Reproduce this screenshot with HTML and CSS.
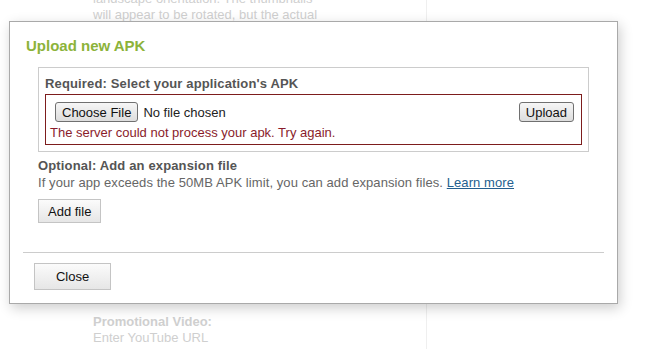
FILE: index.html
```html
<!DOCTYPE html>
<html>
<head>
    <title>Upload new APK</title>
    <link rel="stylesheet" href="styles.css">
</head>
<body>
    <div class="page">
        <div class="main">
            <p class="faded">landscape orientation. The thumbnails<br>will appear to be rotated, but the actual</p>
            <div class="faded-block">
                <div class="faded-label">Promotional Video:</div>
                <p class="faded">Enter YouTube URL</p>
            </div>
        </div>
        <div class="side"></div>
    </div>

    <div class="dialog">
        <h2 class="dialog-title">Upload new APK</h2>
        <div class="dialog-body">
            <div class="required-box">
                <div class="label">Required: Select your application's APK</div>
                <div class="error-box">
                    <div class="file-row">
                        <div class="file-input">
                            <button class="sys-btn">Choose File</button>
                            <span>No file chosen</span>
                        </div>
                        <button class="sys-btn">Upload</button>
                    </div>
                    <div class="error-text">The server could not process your apk. Try again.</div>
                </div>
            </div>
            <div class="label optional">Optional: Add an expansion file</div>
            <p class="hint">If your app exceeds the 50MB APK limit, you can add expansion files. <a href="#">Learn more</a></p>
            <button class="btn add-btn">Add file</button>
        </div>
        <div class="dialog-footer">
            <button class="btn close-btn">Close</button>
        </div>
    </div>
</body>
</html>
```

FILE: styles.css
```css
:root {
    --title-color: #8cb33a;
    --label-color: #555555;
    --text-color: #666666;
    --border-color: #cccccc;
    --error-color: #8a1c2b;
    --error-border: #7d1d1d;
    --link-color: #245f8f;
    --faded-color: #cfcfcf;
}

body {
    margin: 0;
    background: white;
    font-family: "Liberation Sans", Arial, sans-serif;
    font-size: 13px;
    color: var(--text-color);
    overflow: hidden;
}

.page {
    display: grid;
    grid-template-columns: 426px 1fr;
    height: 349px;
}

.main {
    display: flex;
    flex-direction: column;
    justify-content: space-between;
    padding: 0 0 3px 93px;
}

.side {
    border-left: 1px solid #efefef;
}

.faded {
    margin: 0;
    color: var(--faded-color);
    line-height: 16px;
}

.main > .faded {
    margin-top: -9px;
}

.faded-label {
    color: var(--faded-color);
    font-weight: bold;
    line-height: 16px;
}

.dialog {
    position: absolute;
    top: 21px;
    left: 9px;
    width: 609px;
    height: 283px;
    box-sizing: border-box;
    display: flex;
    flex-direction: column;
    background: white;
    border: 1px solid #a9a9a9;
    box-shadow: 2px 4px 12px rgba(0,0,0,0.2);
}

.dialog-title {
    margin: 0;
    padding: 15px 0 0 16px;
    font-size: 15px;
    line-height: 18px;
    color: var(--title-color);
}

.dialog-body {
    margin: 12px 28px 0 28px;
}

.required-box {
    border: 1px solid var(--border-color);
    padding: 8px 6px 6px 6px;
}

.label {
    font-weight: bold;
    color: var(--label-color);
    line-height: 16px;
    letter-spacing: 0.15px;
}

.error-box {
    margin-top: 2px;
    border: 1px solid var(--error-border);
    padding: 7px 7px 3px 4px;
}

.file-row {
    display: flex;
    justify-content: space-between;
    align-items: center;
}

.file-input {
    display: flex;
    align-items: center;
    gap: 5px;
    margin-left: 5px;
    color: #222;
}

.sys-btn {
    height: 20px;
    padding: 0 6px;
    border: 1px solid #707070;
    border-radius: 3px;
    background: linear-gradient(#f6f6f6, #dddddd);
    font-family: inherit;
    font-size: 13px;
    color: #111;
}

.error-text {
    margin-top: 2px;
    color: var(--error-color);
    line-height: 17px;
}

.optional {
    margin-top: 6px;
    line-height: 15px;
}

.hint {
    margin: 2px 0 0;
    line-height: 16px;
    letter-spacing: 0.08px;
}

.hint a {
    color: var(--link-color);
}

.btn {
    border: 1px solid #c4c4c4;
    background: linear-gradient(#fbfbfb, #e6e6e6);
    font-family: inherit;
    font-size: 13px;
    color: #111;
}

.add-btn {
    margin-top: 8px;
    height: 24px;
    padding: 0 9px;
}

.dialog-footer {
    margin: auto 13px 0 13px;
    border-top: 1px solid var(--border-color);
    padding: 10px 11px 13px;
}

.close-btn {
    width: 77px;
    height: 27px;
}
```
